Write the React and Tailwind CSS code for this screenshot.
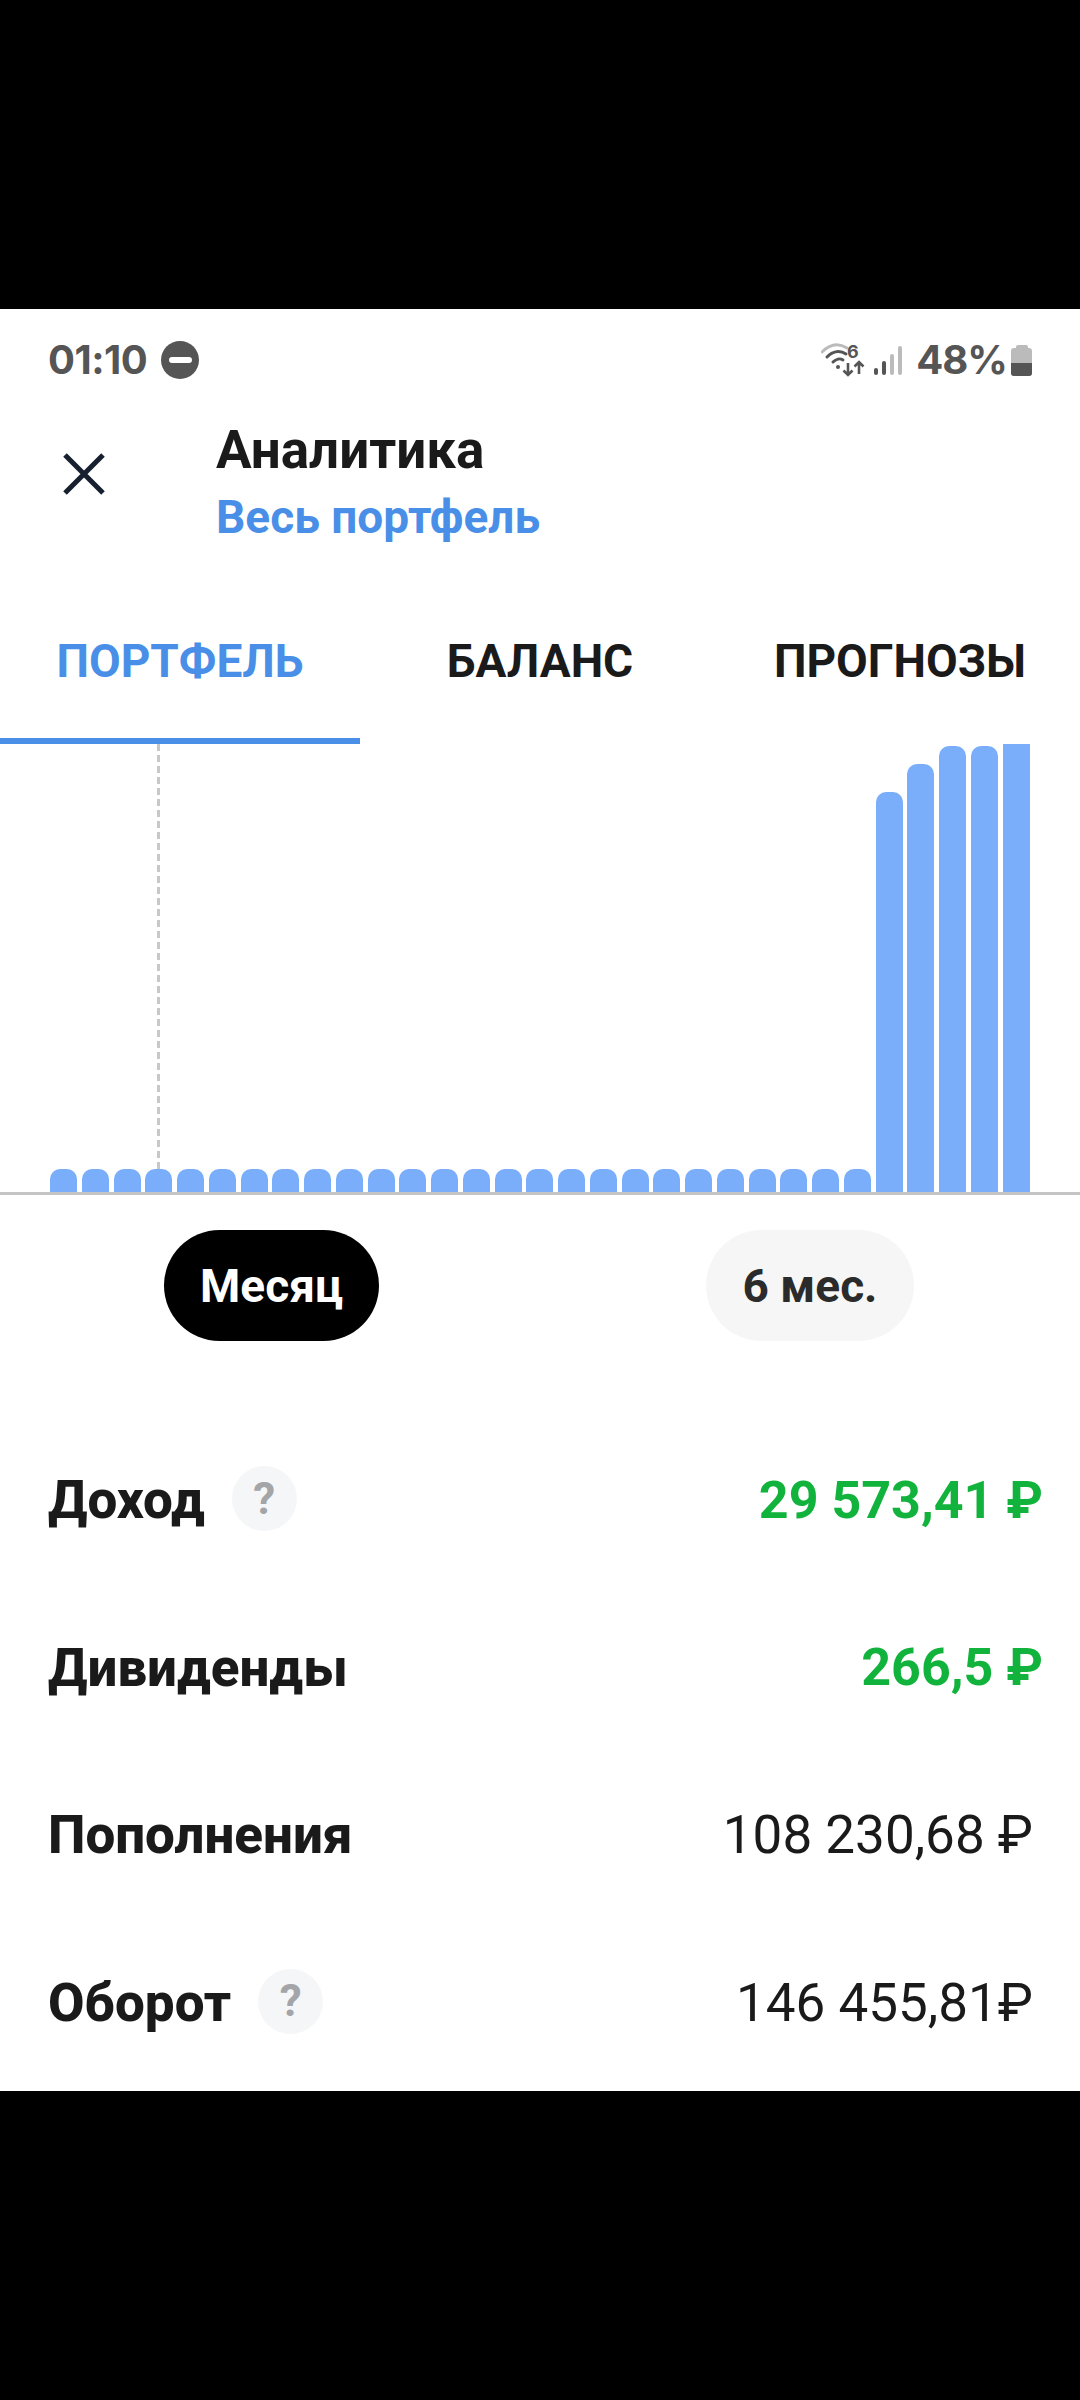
import React from "react";

const bars = [
  ...Array(26).fill({ h: 23, cls: "rounded-t-[10px]" }),
  { h: 400, cls: "rounded-t-[10px]" },
  { h: 428, cls: "rounded-t-[10px]" },
  { h: 446, cls: "rounded-t-[10px]" },
  { h: 446, cls: "rounded-t-[10px]" },
  { h: 448, cls: "" },
];

const StatusBar = () => (
  <div className="h-[102px] pl-[48px] pr-[48px] flex items-center justify-between text-[#555555] font-['Inter',sans-serif]">
    <div className="flex items-center gap-[14px]">
      <span className="text-[40px] font-bold leading-none tracking-[-0.5px]">01:10</span>
      <div className="w-[38px] h-[38px] rounded-full bg-[#555555] flex items-center justify-center">
        <div className="w-[23px] h-[6px] rounded-full bg-white"></div>
      </div>
    </div>
    <div className="flex items-center">
      {/* wifi */}
      <svg width="44" height="42" viewBox="0 -4 44 42" fill="none" className="mr-[9px]">
        <path d="M1 9 C9 1 18 0 26 5" stroke="#bbbbbb" strokeWidth="3" strokeLinecap="round" />
        <path d="M6 14 C12 8 19 7 25 11" stroke="#555555" strokeWidth="3" strokeLinecap="round" />
        <path d="M12 19 C15 16 19 15 22 17" stroke="#555555" strokeWidth="3" strokeLinecap="round" />
        <circle cx="17" cy="24" r="2" fill="#555555" />
        <text x="26" y="15" fontSize="18" fontWeight="700" fill="#555555">6</text>
        <path d="M27 20 V32 M22.5 27.5 L27 32 L31.5 27.5" stroke="#555555" strokeWidth="2.6" />
        <path d="M38 31 V19 M33.5 23.5 L38 19 L42.5 23.5" stroke="#555555" strokeWidth="2.6" />
      </svg>
      {/* signal */}
      <div className="flex items-end gap-[4px] h-[29px] mr-[14px]">
        <div className="w-[4px] h-[7px] rounded-full bg-[#555555]"></div>
        <div className="w-[4px] h-[14px] rounded-full bg-[#555555]"></div>
        <div className="w-[4px] h-[21px] rounded-full bg-[#bbbbbb]"></div>
        <div className="w-[4px] h-[29px] rounded-full bg-[#bbbbbb]"></div>
      </div>
      <span className="text-[40px] font-bold leading-none tracking-[-1px]">48%</span>
      {/* battery */}
      <div className="ml-[4px] flex flex-col items-center">
        <div className="w-[12px] h-[3px] rounded-t-[2px] bg-[#bbbbbb]"></div>
        <div className="w-[21px] h-[28px] rounded-[3px] overflow-hidden bg-[#bbbbbb] flex flex-col justify-end">
          <div className="h-[13px] bg-[#555555]"></div>
        </div>
      </div>
    </div>
  </div>
);

const Help = () => (
  <div className="w-[65px] h-[65px] -mt-[4px] rounded-full bg-[#f5f6f7] flex items-center justify-center text-[#a3a5a8] text-[44px] font-bold leading-none">
    ?
  </div>
);

const Row = ({ label, help, value, green }) => (
  <div className="h-[167.5px] pl-[48px] flex items-center justify-between">
    <div className="flex items-center gap-[27px]">
      <span className="text-[53px] font-extrabold text-[#1a1a1a] leading-none">{label}</span>
      {help && <Help />}
    </div>
    {green ? (
      <span className="pr-[37px] text-[52px] font-bold text-[#12b33d] leading-none">{value}</span>
    ) : (
      <span className="pr-[47px] text-[53px] text-[#1a1a1a] leading-none">{value}</span>
    )}
  </div>
);

export default function App() {
  return (
    <div className="w-[1080px] h-[2400px] bg-black flex flex-col pt-[309px] font-['Roboto',sans-serif]">
      <div className="bg-white h-[1782px] flex flex-col">
        <StatusBar />

        {/* Header */}
        <div className="h-[133px] flex items-start">
          <div className="w-[216px] pl-[62px] pt-[41px]">
            <svg width="44" height="44" viewBox="0 0 44 44" fill="none" stroke="#17202f" strokeWidth="5">
              <path d="M3 3 L41 41 M41 3 L3 41" />
            </svg>
          </div>
          <div className="flex flex-col pt-[9px]">
            <span className="text-[53px] font-bold text-[#1a1a1a] leading-[60px]">Аналитика</span>
            <span className="text-[46px] font-bold text-[#4a8fe7] leading-[52px] mt-[11px]">Весь портфель</span>
          </div>
        </div>

        {/* Tabs */}
        <div className="h-[200px] flex items-stretch">
          <div className="w-[360px] flex justify-center pt-[90px] border-b-[6px] border-[#4a8fe7] text-[46px] leading-[54px] font-bold text-[#4a8fe7]">ПОРТФЕЛЬ</div>
          <div className="w-[360px] flex justify-center pt-[90px] text-[46px] leading-[54px] font-bold text-[#1a1a1a]">БАЛАНС</div>
          <div className="w-[360px] flex justify-center pt-[90px] text-[46px] leading-[54px] font-bold text-[#1a1a1a]">ПРОГНОЗЫ</div>
        </div>

        {/* Chart */}
        <div className="relative h-[451px] border-b-[3px] border-[#c4c4c4] pl-[50px] flex items-end gap-[4.75px]">
          <div className="absolute left-[157px] top-0 bottom-[23px] w-[3px] bg-[repeating-linear-gradient(to_bottom,#c8c8c8_0,#c8c8c8_7px,transparent_7px,transparent_11px)]"></div>
          {bars.map((b, i) => (
            <div key={i} className={`w-[27px] bg-[#7baefa] ${b.cls}`} style={{ height: b.h }}></div>
          ))}
        </div>

        {/* Period */}
        <div className="h-[222px] flex items-start pt-[35px]">
          <div className="w-[215px] h-[111px] ml-[164px] rounded-full bg-black text-white flex items-center justify-center pt-[2px] text-[46px] font-bold">Месяц</div>
          <div className="w-[208px] h-[111px] ml-[327px] rounded-full bg-[#f5f6f5] text-[#2b2b2b] flex items-center justify-center pt-[2px] text-[46px] font-bold">6 мес.</div>
        </div>

        {/* Stats */}
        <div className="flex flex-col">
          <Row label="Доход" help value="29 573,41 ₽" green />
          <Row label="Дивиденды" value="266,5 ₽" green />
          <Row label="Пополнения" value="108 230,68 ₽" />
          <Row label="Оборот" help value="146 455,81₽" />
        </div>
      </div>
    </div>
  );
}
